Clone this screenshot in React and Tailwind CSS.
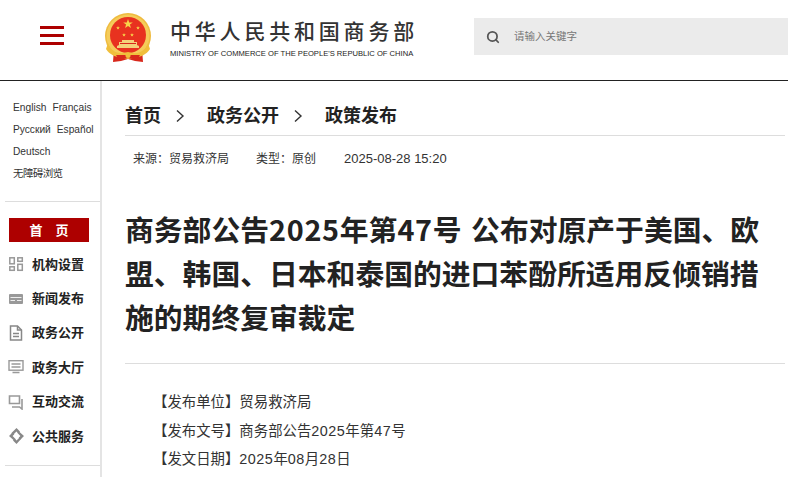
import { Search } from "lucide-react";

const FONT = "font-['Liberation_Sans','Noto_Sans_CJK_SC',sans-serif]";

function Star({ x, y, r }) {
  const pts = [];
  for (let i = 0; i < 10; i++) {
    const rad = i % 2 === 0 ? r : r * 0.4;
    const a = (Math.PI / 5) * i - Math.PI / 2;
    pts.push(`${(x + rad * Math.cos(a)).toFixed(2)},${(y + rad * Math.sin(a)).toFixed(2)}`);
  }
  return <polygon points={pts.join(" ")} fill="#f8d54a" />;
}

function Emblem() {
  return (
    <svg width="46" height="50" viewBox="0 0 46 50" className="shrink-0">
      {/* ribbons */}
      <path d="M9 36 L8 49 L16 48 L23 46 L30 48 L38 49 L37 36 Z" fill="#d8281c" />
      {/* gold rim */}
      <circle cx="23" cy="23" r="23" fill="#efbb3f" />
      <circle cx="23" cy="23" r="21.5" fill="#f5cc5a" />
      <circle cx="23" cy="22" r="18" fill="#e8321f" />
      <Star x={23} y={11} r={5} />
      <Star x={13} y={15} r={2} />
      <Star x={33} y={15} r={2} />
      <Star x={19} y={22} r={2} />
      <Star x={27} y={22} r={2} />
      {/* gate */}
      <path d="M17 27h12v2h3v3l2 1v2H12v-2l2-1v-3h3z" fill="#f4d27a" />
      <path d="M15 30h16v1H15z" fill="#d8281c" />
      {/* wreath */}
      <path d="M3 30 C6 39 14 42 23 39 C32 42 40 39 43 30 L45 36 C40 44 30 46 23 43 C16 46 6 44 1 36 Z" fill="#f0bf3c" />
      <path d="M11 42h24l-3 5-9-2-9 2z" fill="#d8281c" />
      <circle cx="23" cy="42.5" r="2.5" fill="#f0bf3c" />
    </svg>
  );
}

const navItems = [
  {
    label: "机构设置",
    icon: (
      <g fill="none" stroke="#999" strokeWidth="1.5">
        <rect x="1.8" y="1.8" width="4.5" height="6" />
        <rect x="9.8" y="1.8" width="4.5" height="3.5" />
        <rect x="1.8" y="10.8" width="4.5" height="3.5" />
        <rect x="9.8" y="8.3" width="4.5" height="6" />
      </g>
    ),
  },
  {
    label: "新闻发布",
    icon: (
      <g>
        <rect x="1" y="3" width="14" height="10" rx="1" fill="#999" />
        <path d="M2.5 6.5h11M2.5 9.5h4.5M9 9.5h4.5" stroke="#eee" strokeWidth="1" />
      </g>
    ),
  },
  {
    label: "政务公开",
    icon: (
      <g fill="none" stroke="#888" strokeWidth="1.5">
        <path d="M2.5 1h7l4 4v10h-11z" />
        <path d="M9.5 1v4h4M5 8.5h6M5 11.5h6" />
      </g>
    ),
  },
  {
    label: "政务大厅",
    icon: (
      <g fill="none" stroke="#999" strokeWidth="1.4">
        <rect x="1" y="1.7" width="14" height="9.5" />
        <path d="M3.5 5h9M3.5 8h9M4.5 13.5h7" />
      </g>
    ),
  },
  {
    label: "互动交流",
    icon: (
      <g fill="none" stroke="#999" strokeWidth="1.6">
        <path d="M1.5 2h10v7.5h-10z" />
        <path d="M14 5v10l-2.5-2H4" />
      </g>
    ),
  },
  {
    label: "公共服务",
    icon: (
      <g fill="#888">
        <path d="M8.5 0l3.5 3.5-1.8 1.8-1.7-1.7-3.3 3.2L3.2 5.3z" />
        <path d="M16 8l-3.5 3.5-1.8-1.8 1.7-1.7-3.2-3.3 1.5-1.5z" />
        <path d="M8.5 16L5 12.5l1.8-1.8 1.7 1.7 3.3-3.2 1.5 1.5z" />
        <path d="M1 8l3.5-3.5 1.8 1.8L4.6 8l3.2 3.3-1.5 1.5z" />
      </g>
    ),
  },
];

function Sidebar() {
  return (
    <aside className="w-[102px] shrink-0 border-r-2 border-[#e4e4e4] h-[396px]">
      <div className="ml-[5px] w-[95px] border-b border-[#ddd] pl-2 pt-4 h-[121px] text-[10.2px] text-[#333]">
        <div className="flex gap-[6px] h-[22px] items-center leading-none">
          <span>English</span>
          <span>Français</span>
        </div>
        <div className="flex gap-[6px] h-[22px] items-center leading-none">
          <span>Русский</span>
          <span>Español</span>
        </div>
        <div className="h-[22px] flex items-center leading-none">Deutsch</div>
        <div className="h-[21px] flex items-center leading-none text-[10.5px] tracking-[-0.6px]">无障碍浏览</div>
      </div>
      <div className="ml-[5px] w-[95px] border-b border-[#ddd] pl-1 pt-[16px] h-[264px] box-border">
        <div className="w-20 h-6 bg-[#ad0000] text-white text-[13px] font-bold flex items-center justify-center gap-[13px] leading-none">
          <span>首</span>
          <span>页</span>
        </div>
        <ul className="mt-[5px]">
          {navItems.map((item) => (
            <li key={item.label} className="flex items-center h-[34.4px] text-[13px] font-bold text-[#222]">
              <svg width="16" height="16" viewBox="0 0 16 16" className="shrink-0 -ml-[1px]">
                {item.icon}
              </svg>
              <span className="ml-[8px] leading-none">{item.label}</span>
            </li>
          ))}
        </ul>
      </div>
    </aside>
  );
}

export default function App() {
  return (
    <div className={`w-[788px] h-[477px] overflow-hidden bg-white ${FONT}`}>
      <header className="h-[81px] border-b border-[#222] flex items-start">
        <button className="ml-10 mt-[26px] w-6 flex flex-col gap-[5px]">
          <span className="block h-[3px] bg-[#ad0000]" />
          <span className="block h-[3px] bg-[#ad0000]" />
          <span className="block h-[3px] bg-[#ad0000]" />
        </button>
        <div className="ml-[41px] mt-[13px]">
          <Emblem />
        </div>
        <div className="ml-[19px] mt-[19px] w-[246px]">
          <div className="text-[21px] leading-[26px] tracking-[3.8px] font-medium text-[#333] whitespace-nowrap">中华人民共和国商务部</div>
          <div className="mt-[3px] text-[7.6px] leading-[11px] text-[#222] whitespace-nowrap">
            MINISTRY OF COMMERCE OF THE PEOPLE'S REPUBLIC OF CHINA
          </div>
        </div>
        <div className="ml-[58px] mt-[18px] flex-1 h-[37px] bg-[#ebebeb] flex items-center pl-3">
          <Search size={14} strokeWidth={3} className="text-[#555]" />
          <span className="ml-[14px] text-[10.5px] text-[#777] leading-none">请输入关键字</span>
        </div>
      </header>
      <div className="flex">
        <Sidebar />
        <main className="flex-1 min-w-0 pl-[23px] pr-[3px]">
          <nav className="h-[55px] border-b border-[#ddd] flex items-center pt-[15px] text-lg font-bold text-[#222] leading-none">
            <span>首页</span>
            <svg width="10" height="14" viewBox="0 0 10 14" className="ml-[14px] mr-[22px]" fill="none" stroke="#333" strokeWidth="1.4">
              <path d="M2 1.5l6 5.5-6 5.5" />
            </svg>
            <span>政务公开</span>
            <svg width="10" height="14" viewBox="0 0 10 14" className="ml-[14px] mr-[22px]" fill="none" stroke="#333" strokeWidth="1.4">
              <path d="M2 1.5l6 5.5-6 5.5" />
            </svg>
            <span>政策发布</span>
          </nav>
          <div className="flex pl-2 mt-[15px] text-xs leading-[16px] text-[#333]">
            <span>来源：贸易救济局</span>
            <span className="ml-[27px]">类型：原创</span>
            <span className="ml-7 text-[13px]">2025-08-28 15:20</span>
          </div>
          <h1 className="mt-10 pb-6 border-b border-[#ddd] font-['Noto_Sans_CJK_SC',sans-serif] text-[28.8px] leading-[44px] font-bold text-[#222] [word-spacing:3px]">
            商务部公告<span className="tracking-[0.7px]">2025</span>年第<span className="tracking-[0.7px]">47</span>号 公布对原产于美国、欧盟、韩国、日本和泰国的进口苯酚所适用反倾销措施的期终复审裁定
          </h1>
          <div className="mt-6 text-[14.4px] leading-[28.5px] text-[#333] pl-7">
            <p>【发布单位】贸易救济局</p>
            <p>【发布文号】商务部公告<span className="tracking-[0.5px]">2025</span>年第<span className="tracking-[0.5px]">47</span>号</p>
            <p>【发文日期】<span className="tracking-[0.5px]">2025</span>年<span className="tracking-[0.5px]">08</span>月<span className="tracking-[0.5px]">28</span>日</p>
          </div>
        </main>
      </div>
    </div>
  );
}
